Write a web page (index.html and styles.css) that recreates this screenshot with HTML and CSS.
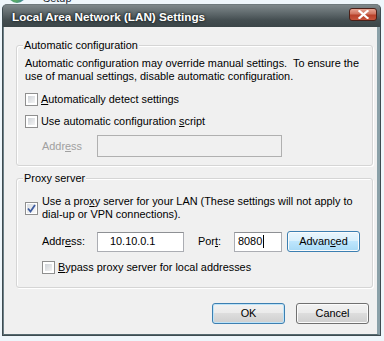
FILE: index.html
```html
<!DOCTYPE html>
<html lang="en">
  <head>
    <meta charset="utf-8">
    <title>Local Area Network (LAN) Settings</title>
    <link rel="stylesheet" href="styles.css">
  </head>
  <body>

    <div class="behind">
      <span class="globe"></span>
      <span class="setup">Setup</span>
    </div>

    <div class="window">
      <div class="titlebar">
        <span class="title">Local Area Network (LAN) Settings</span>
        <span class="close">
          <svg width="11" height="9" viewBox="0 0 11 9"><path d="M1.5 1 L9.5 8 M9.5 1 L1.5 8" stroke="#fff" stroke-width="2.2" stroke-linecap="square"/></svg>
        </span>
      </div>

      <div class="client">

        <!-- Automatic configuration -->
        <div class="group group-auto">
          <div class="legend">Automatic configuration</div>
          <p class="note">Automatic configuration may override manual settings.&nbsp; To ensure the<br>use of manual settings, disable automatic configuration.</p>
          <div class="check check-first"><span class="box"></span><span><u>A</u>utomatically detect settings</span></div>
          <div class="check check-second"><span class="box"></span><span>Use automatic configuration <u>s</u>cript</span></div>
          <div class="field-row disabled">
            <span class="field-label">Addr<u>e</u>ss</span>
            <span class="field field-script"></span>
          </div>
        </div>

        <!-- Proxy server -->
        <div class="group group-proxy">
          <div class="legend">Proxy server</div>
          <div class="check check-proxy">
            <span class="box checked">
              <svg width="9" height="9" viewBox="0 0 9 9"><path d="M1 4.5 L3.5 7.5 L8 1" fill="none" stroke="#3e5ca0" stroke-width="1.8"/></svg>
            </span>
            <span>Use a pro<u>x</u>y server for your LAN (These settings will not apply to<br>dial-up or VPN connections).</span>
          </div>
          <div class="field-row proxy-row">
            <span class="field-label">Addr<u>e</u>ss:</span>
            <span class="field field-address">10.10.0.1</span>
            <span class="port-label">Por<u>t</u>:</span>
            <span class="field field-port">8080<span class="caret"></span></span>
            <span class="button button-hot">Advan<u>c</u>ed</span>
          </div>
          <div class="check check-bypass"><span class="box"></span><span><u>B</u>ypass proxy server for local addresses</span></div>
        </div>

        <div class="actions">
          <span class="button button-default">OK</span>
          <span class="button">Cancel</span>
        </div>

      </div>
    </div>

  </body>
</html>
```

FILE: styles.css
```css
* {
  box-sizing: border-box;
}

body {
  margin: 0;
  background-color: #eef6fb;
  font-family: "Liberation Sans", Arial, sans-serif;
  font-size: 10.9px;
  line-height: 13px;
  color: #000;
}

u {
  text-decoration-thickness: 1px;
  text-underline-offset: 1px;
}

/* what is seen above the dialog */
.behind {
  height: 4px;
  overflow: hidden;
  display: flex;
  align-items: flex-start;
}

.globe {
  width: 18px;
  height: 18px;
  margin: -15px 0 0 8px;
  border-radius: 50%;
  background: radial-gradient(circle at 40% 80%, #5fb25a, #2a6fc0 70%);
}

.setup {
  margin: -8px 0 0 17px;
  color: #1e2a33;
}

/* the dialog frame */
.window {
  width: 379px;
  height: 332px;
  margin-left: 2px;
  border: 1px solid #3e4c51;
  border-top-color: #6f7a7d;
  border-radius: 5px 5px 0 0;
  background-color: #566a70;
  display: flex;
  flex-direction: column;
}

.titlebar {
  height: 22px;
  display: flex;
  align-items: center;
  padding: 0 3px 0 9px;
  border-radius: 4px 4px 0 0;
  background: linear-gradient(#7e888b, #596366 45%, #434d50 70%, #3b4548);
}

.title {
  flex: 1;
  color: #fff;
  font-weight: bold;
  font-size: 11.7px;
  text-shadow: 0 0 2px #1a2022, 0 0 3px #1a2022;
}

.close {
  width: 28px;
  height: 13px;
  margin-top: -4px;
  display: flex;
  align-items: center;
  justify-content: center;
  border: 1px solid #4b2018;
  border-radius: 3px;
  background: linear-gradient(#e8a593, #d0735e 45%, #b8412a 55%, #c7553c);
}

.client {
  flex: 1;
  background-color: #f0f0f0;
  padding: 0 8px 0 12px;
  border-left: 1px solid #6c8088;
  border-right: 3px solid #8aa0a8;
  border-bottom: 1px solid #566a70;
  display: flex;
  flex-direction: column;
}

/* group boxes */
.group {
  border: 1px solid #d5d5d5;
  border-radius: 3px;
  box-shadow: inset 1px 1px 0 #fff, 1px 1px 0 #fff;
  padding: 0 8px;
  width: 357px;
}

.group-auto {
  margin-top: 18px;
  padding-bottom: 8px;
}

.group-proxy {
  margin-top: 12px;
  padding-bottom: 13px;
}

.legend {
  width: fit-content;
  margin: -7px 0 0 -2px;
  padding: 0 1px;
  background-color: #f0f0f0;
}

.note {
  margin: 5px 0 0;
  white-space: nowrap;
}

/* checkboxes */
.check {
  display: flex;
  align-items: center;
  gap: 3px;
  white-space: nowrap;
}

.check-first {
  margin-top: 10px;
}

.check-second {
  margin-top: 9px;
}

.check-proxy {
  margin-top: 10px;
  gap: 4px;
}

.check-bypass {
  margin: 9px 0 0 17px;
  gap: 3px;
}

.box {
  width: 13px;
  height: 13px;
  flex: none;
  border: 1px solid #8f8f8f;
  padding: 2px;
  background: linear-gradient(135deg, #cfd3d8, #f4f4f4) content-box, #fff;
  display: flex;
  align-items: center;
  justify-content: center;
}

.box.checked {
  padding: 1px;
  background: linear-gradient(135deg, #d9dde2, #fafafa) content-box, #fff;
}

/* text fields */
.field-row {
  display: flex;
  align-items: center;
  margin-left: 17px;
}

.disabled {
  margin-top: 7px;
  color: #a0a0a0;
}

.field-label {
  width: 55px;
}

.field {
  height: 22px;
  display: flex;
  align-items: center;
  padding-left: 12px;
  border: 1px solid #abadb3;
  border-top-color: #8e9094;
  background-color: #fff;
}

.field-script {
  width: 185px;
  border-color: #b0b0b0;
  background-color: #f0f0f0;
}

.proxy-row {
  margin-top: 10px;
}

.field-address {
  width: 87px;
  height: 20px;
}

.port-label {
  margin-left: 14px;
  width: 36px;
}

.field-port {
  width: 48px;
  height: 20px;
  padding-left: 3px;
}

.caret {
  width: 1px;
  height: 13px;
  margin-left: 1px;
  background-color: #000;
}

/* buttons */
.button {
  width: 73px;
  height: 21px;
  display: flex;
  align-items: center;
  justify-content: center;
  border: 1px solid #707070;
  border-radius: 3px;
  background: linear-gradient(#f2f2f2, #ebebeb 45%, #dddddd 50%, #cfcfcf);
  box-shadow: inset 0 0 0 1px #fbfbfb;
}

.button-hot {
  margin-left: 5px;
  border-color: #3c7fb1;
  background: linear-gradient(#eaf6fd, #d9f0fc 45%, #bee6fd 50%, #a7d9f5);
}

.button-default {
  border-color: #3c7fb1;
  box-shadow: inset 0 0 0 1px #bde3f8;
}

.actions {
  display: flex;
  justify-content: flex-end;
  gap: 11px;
  margin-top: 15px;
}
```
